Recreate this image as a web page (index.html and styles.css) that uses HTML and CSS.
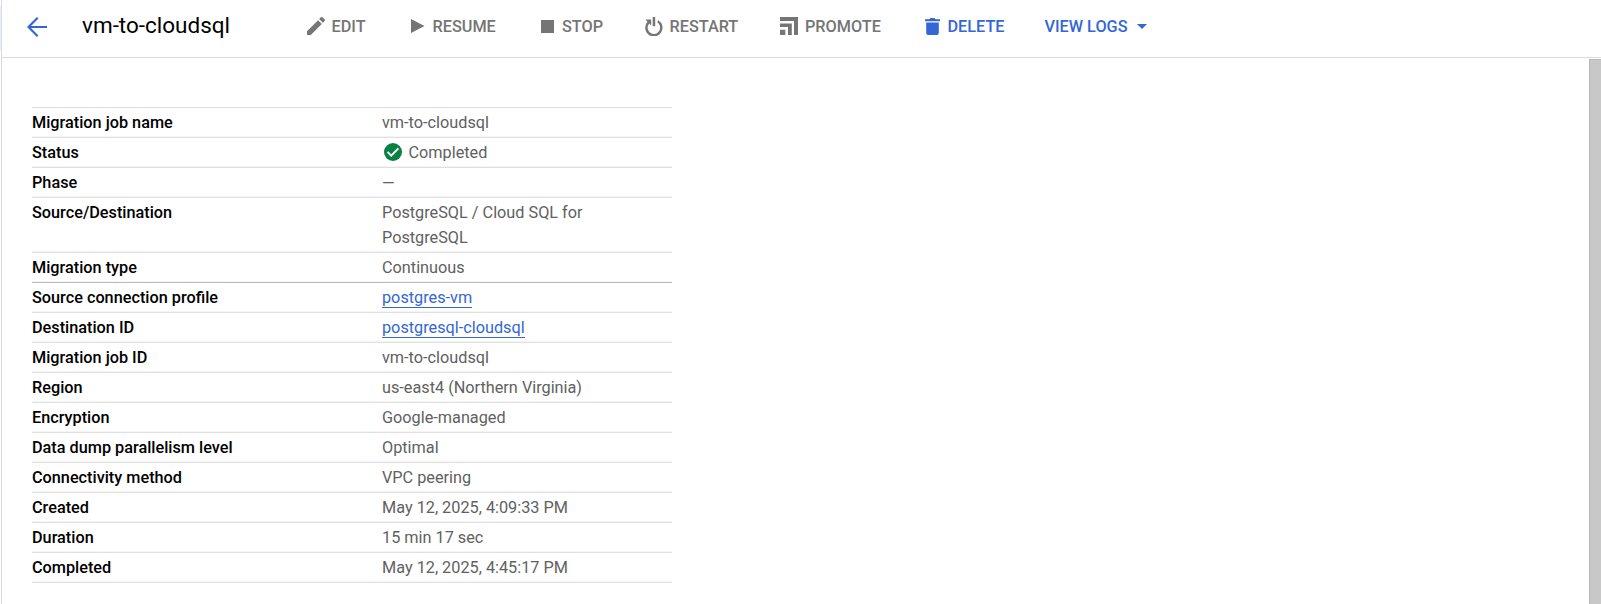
FILE: index.html
```
<!DOCTYPE html>
<html lang="en">
<head>
<meta charset="utf-8">
<title>vm-to-cloudsql</title>
<link rel="stylesheet" href="styles.css">
</head>
<body>
<div class="rail"><div class="rail-active"></div></div>
<div class="page">
  <header class="bar">
    <a class="back"><svg viewBox="0 0 20 20" width="20" height="20" fill="none" stroke="currentColor" stroke-width="2.2"><path d="M20 10H2M10.7 .8 1.5 10l9.2 9.2"/></svg></a>
    <h1 class="title">vm-to-cloudsql</h1>
    <nav class="actions">
      <a class="action edit"><svg viewBox="0 0 18 18" width="18" height="18"><path d="M0 14.2V18h3.8L14.8 6.9 11.1 3.200zM17.700 4c.4-.4.4-1 0-1.400L15.400.300c-.4-.4-1-.4-1.400 0L12.200 2.100l3.700 3.700z"/></svg><span>EDIT</span></a>
      <a class="action resume"><svg viewBox="0 0 14 14" width="14" height="14"><path d="M0 0v14l13.500-7z"/></svg><span>RESUME</span></a>
      <a class="action stop"><svg viewBox="0 0 13 13" width="13" height="13"><path d="M0 0h13v13H0z"/></svg><span>STOP</span></a>
      <a class="action restart"><svg viewBox="0 0 18 19" width="18" height="19"><path d="M7.700 0h2.500v9.200H7.700z"/><path d="M.4 2.600h5.800v5.800L4.200 6.400a6.300 6.300 0 1 0 9.200-.2 6 6 0 0 0-1.200-1l1.100-2A8.700 8.700 0 1 1 2.500 4.700z"/></svg><span>RESTART</span></a>
      <a class="action promote"><svg viewBox="0 0 18 18" width="18" height="18"><path d="M0 0h18v18h-4V4H0zM0 6.500h11.800V18H8V10H0zM0 12.700h5.300V18H0z"/></svg><span>PROMOTE</span></a>
      <a class="action delete blue"><svg viewBox="0 0 15 17" width="15" height="17"><path d="M0 1.200h4.500L5.500 0h4l1 1.200H15v2H0zM1.200 4.600h12.600V15a2 2 0 0 1-2 2H3.200a2 2 0 0 1-2-2z"/></svg><span>DELETE</span></a>
      <a class="action logs blue"><span>VIEW LOGS</span><svg viewBox="0 0 10 5" width="10" height="5"><path d="M0 0h10L5 5z"/></svg></a>
    </nav>
  </header>
  <div class="body">
    <main class="content">
      <dl class="details">
        <div class="row"><dt>Migration job name</dt><dd>vm-to-cloudsql</dd></div>
        <div class="row"><dt>Status</dt><dd class="status"><svg viewBox="0 0 18 18" width="18" height="18"><circle cx="9" cy="9" r="9" fill="#0b8043"/><path d="M3.600 9l3.600 3.600 7.200-7.200" fill="none" stroke="#fff" stroke-width="2"/></svg><span>Completed</span></dd></div>
        <div class="row"><dt>Phase</dt><dd class="empty">—</dd></div>
        <div class="row"><dt>Source/Destination</dt><dd>PostgreSQL / Cloud SQL for PostgreSQL</dd></div>
        <div class="row strong"><dt>Migration type</dt><dd>Continuous</dd></div>
        <div class="row"><dt>Source connection profile</dt><dd><a class="link">postgres-vm</a></dd></div>
        <div class="row"><dt>Destination ID</dt><dd><a class="link">postgresql-cloudsql</a></dd></div>
        <div class="row"><dt>Migration job ID</dt><dd>vm-to-cloudsql</dd></div>
        <div class="row"><dt>Region</dt><dd>us-east4 (Northern Virginia)</dd></div>
        <div class="row"><dt>Encryption</dt><dd>Google-managed</dd></div>
        <div class="row"><dt>Data dump parallelism level</dt><dd>Optimal</dd></div>
        <div class="row"><dt>Connectivity method</dt><dd>VPC peering</dd></div>
        <div class="row"><dt>Created</dt><dd>May 12, 2025, 4:09:33 PM</dd></div>
        <div class="row"><dt>Duration</dt><dd>15 min 17 sec</dd></div>
        <div class="row"><dt>Completed</dt><dd>May 12, 2025, 4:45:17 PM</dd></div>
      </dl>
    </main>
    <div class="scrollbar"></div>
  </div>
</div>
</body>
</html>
```
FILE: styles.css
```
* { box-sizing: border-box; }
body { margin: 0; height: 604px; display: flex; overflow: hidden; background: #fff; color: #000; font-family: Roboto, "Liberation Sans", sans-serif; font-size: 16.25px; }
svg { display: block; flex: none; fill: currentColor; }
.rail { width: 2px; border-right: 1px solid #dadce0; }
.rail-active { margin-top: 6px; height: 45px; background: #e8f0fe; }
.page { flex: 1; display: flex; flex-direction: column; }
.bar { height: 58px; flex: none; display: flex; border-bottom: 1px solid #dcdcdc; }
.back { margin: 17px 0 0 25px; color: #3367d6; height: 20px; }
.back svg { fill: none; }
.title { margin: 10px 0 0 35px; width: 225px; font-size: 22.5px; font-weight: 400; line-height: 30px; white-space: nowrap; }
.actions { display: flex; height: 52px; align-items: center; color: #757575; font-weight: 500; white-space: nowrap; }
.action { display: flex; align-items: center; }
.action span { padding-top: 1px; }
.edit { gap: 6.5px; width: 104px; }
.resume { gap: 7.5px; width: 129.5px; }
.stop { gap: 8.5px; width: 104.5px; }
.restart { gap: 6.5px; width: 135px; }
.promote { gap: 7px; width: 145px; }
.delete { gap: 7.5px; width: 119.5px; }
.logs { gap: 10px; }
.blue { color: #3367d6; }
.body { flex: 1; display: flex; justify-content: space-between; padding-top: 1px; }
.content { padding: 48px 0 0 30px; }
.details { margin: 0; width: 640px; border-top: 1px solid #dcdcdc; }
.row { display: flex; padding: 2px 0; border-bottom: 1px solid #dfdfdf; box-shadow: inset 0 -1px #f5f5f5; line-height: 25px; }
.strong { border-bottom-color: #bdbdbd; }
dt { width: 350px; font-weight: 500; }
dd { margin: 0; width: 240px; color: #616161; }
.empty { margin: 1px 0 -1px; }
.status { display: flex; align-items: flex-start; gap: 6.5px; padding-left: 2px; }
.status svg { margin-top: 3px; }
.link { display: inline-block; line-height: 19px; color: #3367d6; border-bottom: 1px solid #3367d6; }
.scrollbar { width: 12px; background: #c8c8c8; border: 1px solid #b8b8b8; border-width: 1px 0 0 1px; }
```
